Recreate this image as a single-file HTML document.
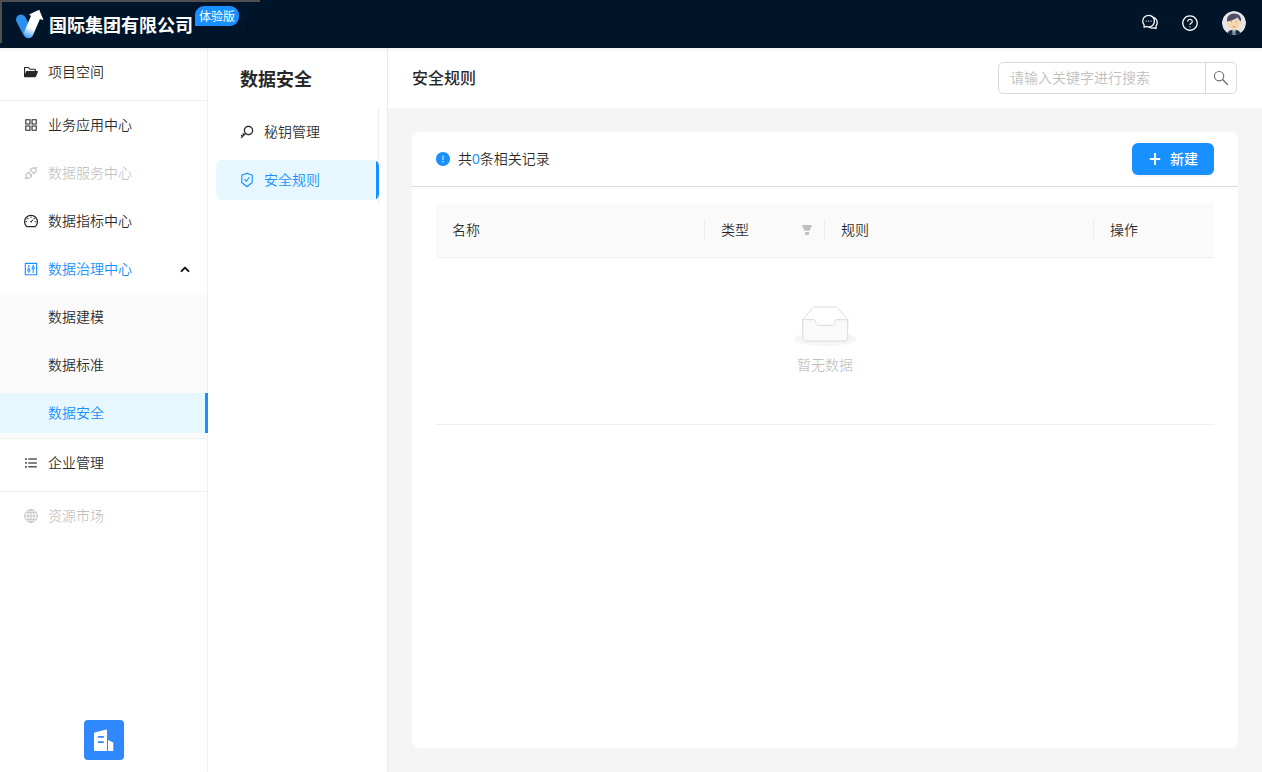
<!DOCTYPE html>
<html lang="zh-CN">
<head>
<meta charset="utf-8">
<title>安全规则</title>
<style>
*{box-sizing:border-box;margin:0;padding:0}
html,body{width:1262px;height:772px;overflow:hidden;background:#fff}
body{font-family:"Liberation Sans","Noto Sans CJK SC",sans-serif;font-size:14px;font-weight:350;color:rgba(0,0,0,.85);position:relative}
.abs{position:absolute}
.t{position:absolute;white-space:nowrap;line-height:22px;height:22px}
/* header */
#hdr{left:0;top:0;width:1262px;height:48px;background:#001529}
#hshadow{left:0;top:48px;width:1262px;height:5px;background:linear-gradient(rgba(0,21,41,.05),rgba(0,21,41,0))}
#gtop{left:0;top:0;width:260px;height:2px;background:linear-gradient(#4d4d4d 50%,#545250 50%)}
#gleft{left:0;top:0;width:2px;height:43px;background:linear-gradient(90deg,#4d4d4d 50%,#545250 50%)}
#title{left:49px;top:13.5px;font-size:18px;font-weight:700;color:#fff;line-height:24px;height:24px}
#badge{left:195px;top:6px;width:44px;height:20px;background:#1890ff;border-radius:9px 9px 9px 0;color:#fff;font-size:12px;font-weight:400;line-height:23px;text-align:center;overflow:hidden}
#semi{left:246px;top:14px;color:#000;font-size:14px}
/* sider */
#sider{left:0;top:48px;width:208px;height:724px;background:#fff;border-right:1px solid #f0f0f0}
.mi{left:48px}
.dis{color:rgba(0,0,0,.25)}
.blue{color:#1890ff}
.hr{left:0;width:207px;height:1px;background:#f0f0f0}
#subbg{left:0;top:293px;width:207px;height:144px;background:#fafafa}
#sel1{left:0;top:393px;width:208px;height:40px;background:#e6f7ff;border-right:3px solid #1890ff}
/* second panel */
#pan{left:208px;top:48px;width:180px;height:724px;background:#fff;border-right:1px solid #ebebeb}
#ptitle{left:240px;top:67px;font-size:18px;font-weight:700;line-height:26px;height:26px}
#pline{left:378px;top:108px;width:1px;height:96px;background:#f0f0f0}
#sel2{left:216px;top:160px;width:163px;height:40px;background:#e6f7ff;border-radius:6px;overflow:hidden}
#sel2:after{content:"";position:absolute;right:0;top:0;width:3px;height:40px;background:#1890ff}
/* main */
#mainbg{left:388px;top:108px;width:874px;height:664px;background:#f5f5f5}
#mtitle{left:412px;top:67px;font-size:16px;font-weight:500;line-height:24px;height:24px}
#search{left:998px;top:62px;width:239px;height:32px;border:1px solid #d9d9d9;border-radius:5px;background:#fff}
#sdiv{left:1205px;top:62px;width:1px;height:32px;background:#d9d9d9}
#ph{left:1010px;top:67px;color:#bfbfbf}
#card{left:412px;top:132px;width:826px;height:616px;background:#fff;border-radius:8px}
#cdiv{left:412px;top:186px;width:826px;height:1px;background:#dcdcdc}
#btn{left:1132px;top:143px;width:82px;height:32px;background:#1890ff;border-radius:6px;box-shadow:0 2px 0 rgba(0,0,0,.045)}
#thead{left:436px;top:203px;width:778px;height:54px;background:#fafafa;border-radius:2px 2px 0 0}
.bl{left:436px;width:778px;height:1px;background:#f0f0f0}
.sep{top:219px;width:1px;height:22px;background:#ececec}
.th{top:219px}
#empty{left:797px;top:354px;color:rgba(0,0,0,.25)}
#fab{left:84px;top:720px;width:40px;height:40px;border-radius:4px;background:#3088ff}
svg{position:absolute;overflow:visible}
</style>
</head>
<body>
<!-- header -->
<div id="hdr" class="abs"></div>
<div id="gtop" class="abs"></div>
<div id="gleft" class="abs"></div>
<div id="title" class="t">国际集团有限公司</div>
<div id="badge" class="abs">体验版</div>
<div id="semi" class="t">;</div>

<!-- sider -->
<div id="sider" class="abs"></div>
<div id="subbg" class="abs"></div>
<div id="sel1" class="abs"></div>
<div class="t mi" style="top:61px">项目空间</div>
<div class="abs hr" style="top:100px"></div>
<div class="t mi" style="top:114px">业务应用中心</div>
<div class="t mi dis" style="top:162px">数据服务中心</div>
<div class="t mi" style="top:210px">数据指标中心</div>
<div class="t mi blue" style="top:258px">数据治理中心</div>
<div class="t mi" style="top:306px">数据建模</div>
<div class="t mi" style="top:354px">数据标准</div>
<div class="t mi blue" style="top:402px">数据安全</div>
<div class="abs hr" style="top:438px"></div>
<div class="t mi" style="top:452px">企业管理</div>
<div class="abs hr" style="top:491px"></div>
<div class="t mi dis" style="top:505px">资源市场</div>
<div id="fab" class="abs"></div>


<!-- logo -->
<svg class="abs" style="left:0;top:0" width="60" height="48" viewBox="0 0 60 48">
<defs><linearGradient id="lg" gradientUnits="userSpaceOnUse" x1="35.4" y1="17.5" x2="27.6" y2="38"><stop offset="0" stop-color="#fff"/><stop offset=".52" stop-color="#fff"/><stop offset="1" stop-color="#3f98f3"/></linearGradient></defs>
<line x1="21" y1="19.5" x2="28.1" y2="33.2" stroke="#2b90ef" stroke-width="10" stroke-linecap="round"/>
<path d="M28.7 33.3L35.6 17.2" stroke="url(#lg)" stroke-width="9.4" stroke-linecap="round" fill="none"/>
<polygon points="39.2,9.8 29,14.5 31.4,16.2 40.2,19.3 43.5,20" fill="#fff"/>
</svg>
<!-- header right icons -->
<svg class="abs" style="left:1141px;top:13.3px" width="18" height="18" viewBox="0 0 1024 1024" fill="#fff"><path d="M573 421c-23.100 0-41 17.900-41 40s17.900 40 41 40c21.100 0 39-17.900 39-40s-17.900-40-39-40zm-280 0c-23.100 0-41 17.900-41 40s17.900 40 41 40c21.100 0 39-17.900 39-40s-17.900-40-39-40z"/><path d="M894 345a343.920 343.920 0 0 0-189-130v.100c-17.100-19-36.400-36.500-58-52.100-163.700-119-393.500-82.700-513 81-96.300 133-92.200 311.900 6 439l.800 132.600c0 3.200.5 6.400 1.500 9.400a31.950 31.950 0 0 0 40.100 20.900L309 806c33.500 11.900 68.100 18.700 102.500 20.600l-.5.400c89.100 64.900 205.900 84.400 313 49l127.100 41.400c3.200 1 6.500 1.600 9.900 1.600 17.700 0 32-14.300 32-32V753c88.100-119.600 90.400-284.900 1-408zM323 735l-12-5-99 31-1-104-8-9c-84.600-103.200-90.200-251.900-11-361 96.400-132.200 281.200-161.400 413-66 132.200 96.100 161.500 280.600 66 412-80.100 109.900-223.500 150.500-348 102zm505-17l-8 10 1 104-98-33-12 5c-56 20.800-115.700 22.500-171 7l-.2-.1A367.310 367.310 0 0 0 729 676c76.400-105.300 88.800-237.600 44.400-350.400l.6.400c23 16.500 44.100 37.100 62 62 72.600 99.600 68.500 235.200-8 330z"/><path d="M433 421c-23.100 0-41 17.900-41 40s17.900 40 41 40c21.100 0 39-17.900 39-40s-17.900-40-39-40z"/></svg>
<svg class="abs" style="left:1181px;top:13.8px" width="18" height="18" viewBox="0 0 1024 1024" fill="#fff"><path d="M512 64C264.600 64 64 264.600 64 512s200.600 448 448 448 448-200.600 448-448S759.400 64 512 64zm0 820c-205.400 0-372-166.600-372-372s166.600-372 372-372 372 166.600 372 372-166.600 372-372 372z"/><path d="M623.600 316.700C593.600 290.400 554 276 512 276s-81.600 14.500-111.600 40.700C369.200 344 352 380.700 352 420v7.600c0 4.400 3.600 8 8 8h48c4.400 0 8-3.600 8-8V420c0-44.100 43.100-80 96-80s96 35.900 96 80c0 31.100-22 59.600-56.100 72.700-21.200 8.100-39.200 22.300-52.100 40.900-13.100 19-19.900 41.800-19.900 64.900V620c0 4.400 3.600 8 8 8h48c4.400 0 8-3.600 8-8v-22.700a48.300 48.300 0 0 1 30.900-44.800c59-22.700 97.100-74.700 97.100-132.500.1-39.300-17.100-76-48.300-103.300zM472 732a40 40 0 1 0 80 0 40 40 0 1 0-80 0z"/></svg>
<!-- avatar -->
<svg class="abs" style="left:1222px;top:11px" width="24" height="24" viewBox="0 0 24 24">
<defs><clipPath id="avc"><circle cx="12" cy="12" r="12"/></clipPath></defs>
<g clip-path="url(#avc)">
<circle cx="12" cy="12" r="12" fill="#e5e5e9"/>
<path d="M3.600 24.500L7.200 19.700Q12 17.700 16.800 19.700L20.400 24.500Z" fill="#1c2635"/>
<path d="M10.500 18.700h3l-.2 5.500h-2.600z" fill="#dbe7f0"/>
<path d="M11.400 19.200h1.200l.7 5h-2.600z" fill="#5f93b3"/>
<rect x="10.500" y="16.500" width="3" height="2.600" fill="#f2c99c"/>
<circle cx="5.400" cy="12.300" r="1.100" fill="#f6d3a8"/><circle cx="18.600" cy="12.300" r="1.100" fill="#f6d3a8"/>
<ellipse cx="12" cy="12.600" rx="6" ry="5.900" fill="#f7d6ab"/>
<path d="M5 10.600C4.400 5.800 7.600 2.600 12.300 2.600C17 2.600 19.800 6.200 19 10.500C17.500 9.500 16.100 7.900 15.600 6.600C13 8.500 8.600 10.100 5 10.600Z" fill="#4e4e69"/>
<circle cx="9.500" cy="10.600" r=".55" fill="#8c8c8c"/><circle cx="14.300" cy="10.600" r=".55" fill="#8c8c8c"/>
<ellipse cx="12" cy="15.700" rx="1.500" ry=".75" fill="#ea8f6f"/>
</g></svg>

<!-- sider icons -->
<svg class="abs" style="left:23px;top:64px" width="16" height="16" viewBox="0 0 1024 1024" fill="#262626"><path d="M928 444H820V330.400c0-17.700-14.300-32-32-32H473L355.700 186.200a8.150 8.150 0 0 0-5.500-2.200H96c-17.700 0-32 14.300-32 32v592c0 17.700 14.300 32 32 32h698c13 0 24.800-7.900 29.700-20l134-332c1.500-3.800 2.300-7.900 2.300-12 0-17.700-14.300-32-32-32zm-180 0H238c-13 0-24.800 7.900-29.700 20L136 643.200V256h188.500l119.600 114.400H748V444z"/></svg>
<svg class="abs" style="left:23px;top:117px" width="16" height="16" viewBox="0 0 1024 1024" fill="#262626"><path d="M464 144H160c-8.800 0-16 7.200-16 16v304c0 8.800 7.200 16 16 16h304c8.800 0 16-7.200 16-16V160c0-8.800-7.200-16-16-16zm-52 268H212V212h200v200zm452-268H560c-8.800 0-16 7.200-16 16v304c0 8.800 7.200 16 16 16h304c8.800 0 16-7.200 16-16V160c0-8.800-7.200-16-16-16zm-52 268H612V212h200v200zM464 544H160c-8.800 0-16 7.200-16 16v304c0 8.800 7.200 16 16 16h304c8.800 0 16-7.200 16-16V560c0-8.800-7.200-16-16-16zm-52 268H212V612h200v200zm452-268H560c-8.800 0-16 7.200-16 16v304c0 8.800 7.200 16 16 16h304c8.800 0 16-7.200 16-16V560c0-8.800-7.200-16-16-16zm-52 268H612V612h200v200z"/></svg>
<svg class="abs" style="left:23px;top:165px" width="16" height="16" viewBox="0 0 1024 1024" fill="rgba(0,0,0,.25)"><path d="M917.700 148.800l-42.400-42.400c-1.600-1.600-3.600-2.300-5.700-2.300s-4.100.8-5.700 2.300l-76.100 76.100a199.270 199.270 0 0 0-112.100-34.300c-51.200 0-102.400 19.500-141.500 58.600L432.300 309.400c-3.100 3.100-3.100 8.200 0 11.300L704 592.400c1.600 1.600 3.600 2.300 5.700 2.300 2 0 4.100-.8 5.700-2.300l101.900-101.900c68.900-69 77-175.700 24.300-253.500l76.100-76.100c3.100-3.200 3.100-8.300 0-11.400zM769.100 441.700l-59.400 59.400-186.800-186.800 59.400-59.400c24.900-24.900 58.100-38.700 93.400-38.700 35.300 0 68.400 13.700 93.400 38.700 24.900 24.900 38.700 58.100 38.700 93.400 0 35.300-13.800 68.400-38.700 93.400zm-190.200 105a8.030 8.030 0 0 0-11.300 0L501 613.300 410.700 523l66.700-66.700c3.100-3.100 3.100-8.200 0-11.300L441 408.600a8.030 8.030 0 0 0-11.300 0L363 475.300l-43-43a7.850 7.850 0 0 0-5.700-2.300c-2 0-4.100.8-5.700 2.300L206.800 534.200c-68.900 69-77 175.700-24.300 253.500l-76.100 76.100a8.030 8.030 0 0 0 0 11.300l42.400 42.400c1.600 1.600 3.600 2.300 5.700 2.300s4.100-.8 5.700-2.300l76.100-76.100c33.700 22.900 72.900 34.300 112.100 34.300 51.200 0 102.400-19.500 141.500-58.600l101.900-101.900c3.100-3.100 3.100-8.200 0-11.300l-43-43 66.700-66.700c3.100-3.100 3.100-8.200 0-11.300l-36.600-36.200zM441.700 769.100a131.320 131.320 0 0 1-93.400 38.700c-35.300 0-68.400-13.700-93.400-38.700a131.320 131.320 0 0 1-38.700-93.400c0-35.300 13.700-68.400 38.700-93.400l59.400-59.400 186.800 186.800-59.400 59.400z"/></svg>
<svg class="abs" style="left:23px;top:213px" width="16" height="16" viewBox="0 0 1024 1024" fill="#262626"><path d="M924.800 385.600a446.700 446.700 0 0 0-96-142.400 446.700 446.700 0 0 0-142.400-96C631.100 123.800 572.500 112 512 112s-119.100 11.800-174.400 35.200a446.700 446.700 0 0 0-142.400 96 446.700 446.700 0 0 0-96 142.400C75.800 440.900 64 499.500 64 560c0 132.700 58.300 257.700 159.900 343.100l1.700 1.400c5.800 4.800 13.100 7.500 20.600 7.500h531.700c7.500 0 14.800-2.700 20.600-7.500l1.700-1.400C901.700 817.700 960 692.700 960 560c0-60.500-11.900-119.100-35.200-174.400zM761.400 836H262.600A371.120 371.120 0 0 1 140 560c0-99.400 38.700-192.800 109-263 70.300-70.300 163.700-109 263-109 99.400 0 192.800 38.700 263 109 70.300 70.300 109 163.700 109 263 0 105.600-44.500 205.500-122.600 276zM623.500 421.500a8.030 8.030 0 0 0-11.300 0L527.700 506c-18.700-5-39.400-.2-54.100 14.500a55.950 55.950 0 0 0 0 79.200 55.950 55.950 0 0 0 79.200 0 55.870 55.870 0 0 0 14.500-54.100l84.500-84.500c3.100-3.100 3.100-8.200 0-11.300l-28.300-28.300zM490 320h44c4.400 0 8-3.600 8-8v-80c0-4.400-3.600-8-8-8h-44c-4.400 0-8 3.600-8 8v80c0 4.400 3.600 8 8 8zm260 218v44c0 4.400 3.600 8 8 8h80c4.400 0 8-3.600 8-8v-44c0-4.400-3.600-8-8-8h-80c-4.400 0-8 3.600-8 8zm12.700-197.200l-31.100-31.100a8.030 8.030 0 0 0-11.300 0l-56.600 56.600a8.030 8.030 0 0 0 0 11.300l31.100 31.100c3.100 3.100 8.200 3.100 11.300 0l56.600-56.600c3.100-3.100 3.100-8.200 0-11.300zm-458.600-31.100a8.030 8.030 0 0 0-11.300 0l-31.100 31.100a8.030 8.030 0 0 0 0 11.300l56.600 56.600c3.100 3.100 8.200 3.100 11.300 0l31.100-31.100c3.100-3.100 3.100-8.200 0-11.300l-56.600-56.600zM262 530h-80c-4.400 0-8 3.600-8 8v44c0 4.400 3.600 8 8 8h80c4.400 0 8-3.600 8-8v-44c0-4.400-3.600-8-8-8z"/></svg>
<svg class="abs" style="left:23px;top:261px" width="16" height="16" viewBox="0 0 1024 1024"><rect x="148" y="148" width="728" height="728" rx="6" fill="none" stroke="#1890ff" stroke-width="72"/><rect x="340" y="256" width="64" height="512" rx="8" fill="#1890ff"/><rect x="620" y="256" width="64" height="512" rx="8" fill="#1890ff"/><circle cx="372" cy="584" r="70" fill="#fff" stroke="#1890ff" stroke-width="68"/><circle cx="652" cy="440" r="70" fill="#fff" stroke="#1890ff" stroke-width="68"/></svg>
<svg class="abs" style="left:0;top:0" width="208" height="772" viewBox="0 0 208 772">
<polyline points="181.500,271.100 185,267.600 188.500,271.100" fill="none" stroke="#141414" stroke-width="1.950" stroke-linecap="round" stroke-linejoin="round"/>
<g fill="#595959"><rect x="25" y="458.200" width="2" height="1.700" rx=".5"/><rect x="25" y="462.100" width="2" height="1.700" rx=".5"/><rect x="25" y="466" width="2" height="1.700" rx=".5"/><rect x="28.200" y="458.300" width="8.700" height="1.500" rx=".3"/><rect x="28.200" y="462.200" width="8.700" height="1.500" rx=".3"/><rect x="28.200" y="466.100" width="8.700" height="1.500" rx=".3"/></g>
<g fill="none" stroke="#c6c6c6" stroke-width="1"><circle cx="31" cy="516" r="6.450"/><ellipse cx="31" cy="516" rx="3" ry="6.450"/><path d="M31 509.500v13M24.600 516h12.800M25.600 512.700h10.800M25.600 519.300h10.800"/></g>
</svg>
<!-- fab icon -->
<svg class="abs" style="left:84px;top:720px" width="40" height="40" viewBox="0 0 40 40"><path d="M10 13.300Q10 12.800 10.600 12.600L22.300 9.600Q23 9.500 23 10.200V31H10.800Q10 31 10 30.200Z" fill="#fff"/><path d="M24 20L28.800 22.200Q29.300 22.500 29.300 23V30.200Q29.300 31 28.500 31H24Z" fill="#fff"/><rect x="13.700" y="16" width="6.300" height="1.800" rx=".9" fill="#3088ff"/><rect x="13.700" y="21.300" width="6.300" height="1.800" rx=".9" fill="#3088ff"/></svg>

<!-- second panel -->
<div id="pan" class="abs"></div>
<div id="ptitle" class="t">数据安全</div>
<div id="pline" class="abs"></div>
<div id="sel2" class="abs"></div>
<div class="t" style="left:264px;top:121px">秘钥管理</div>
<div class="t blue" style="left:264px;top:169px">安全规则</div>

<!-- main -->
<div id="mainbg" class="abs"></div>
<div id="mtitle" class="t">安全规则</div>
<div id="search" class="abs"></div>
<div id="sdiv" class="abs"></div>
<div id="ph" class="t">请输入关键字进行搜索</div>
<div id="card" class="abs"></div>
<div class="t" style="left:458px;top:148px">共<span class="blue">0</span>条相关记录</div>
<div id="cdiv" class="abs"></div>
<div id="btn" class="abs"></div>
<div class="t" style="left:1170px;top:148px;color:#fff;font-weight:500">新建</div>
<div id="thead" class="abs"></div>
<div class="abs bl" style="top:257px"></div>
<div class="abs bl" style="top:424px"></div>
<div class="abs sep" style="left:704px"></div>
<div class="abs sep" style="left:824px"></div>
<div class="abs sep" style="left:1093px"></div>
<div class="t th" style="left:452px">名称</div>
<div class="t th" style="left:721px">类型</div>
<div class="t th" style="left:841px">规则</div>
<div class="t th" style="left:1110px">操作</div>
<div id="empty" class="t">暂无数据</div>

<!-- panel + main icons -->
<svg class="abs" style="left:239px;top:124px" width="16" height="16" viewBox="0 0 1024 1024" fill="#262626"><path d="M608 112c-167.900 0-304 136.100-304 304 0 70.300 23.900 135 63.900 186.500l-41.100 41.100-62.300-62.300a8.150 8.150 0 0 0-11.400 0l-39.800 39.800a8.150 8.150 0 0 0 0 11.400l62.300 62.300-44.900 44.900-62.300-62.300a8.150 8.150 0 0 0-11.400 0l-39.800 39.800a8.150 8.150 0 0 0 0 11.400l62.300 62.300-65.300 65.300a8.030 8.030 0 0 0 0 11.300l42.300 42.300c3.100 3.100 8.200 3.100 11.300 0l253.600-253.600A304.060 304.060 0 0 0 608 720c167.900 0 304-136.100 304-304S775.900 112 608 112zm161.200 465.200C726.200 620.300 668.900 644 608 644c-60.900 0-118.200-23.700-161.200-66.800-43.100-43-66.800-100.300-66.800-161.200 0-60.900 23.700-118.200 66.800-161.200 43-43.100 100.300-66.800 161.200-66.800 60.900 0 118.200 23.700 161.200 66.800 43.100 43 66.800 100.300 66.800 161.200 0 60.900-23.700 118.200-66.800 161.200z"/></svg>
<svg class="abs" style="left:239px;top:172px" width="16" height="16" viewBox="0 0 1024 1024" fill="#1890ff"><path d="M866.900 169.900L527.100 54.100C523 52.700 517.500 52 512 52s-11 .7-15.100 2.100L157.100 169.900c-8.300 2.800-15.100 12.400-15.100 21.200v482.400c0 8.800 5.700 20.400 12.600 25.900L499.300 968.100c3.500 2.700 8 4.100 12.600 4.100s9.200-1.400 12.600-4.100L869.400 699.400c6.900-5.400 12.600-17 12.600-25.900V191.100c.2-8.800-6.600-18.300-15.100-21.200zM810 654.300L512 886.500 214 654.300V226.700l298-101.600 298 101.600v427.600zm-405.800-201c-3-4.100-7.800-6.600-13-6.600H336c-6.500 0-10.300 7.400-6.500 12.700l126.400 174a16.100 16.100 0 0 0 26 0l212.600-292.700c3.800-5.300 0-12.700-6.500-12.700h-55.200c-5.100 0-10 2.500-13 6.600L468.900 542.400l-64.700-89.100z"/></svg>
<svg class="abs" style="left:435px;top:151px" width="16" height="16" viewBox="0 0 1024 1024" fill="#1890ff"><path d="M512 64C264.600 64 64 264.600 64 512s200.600 448 448 448 448-200.600 448-448S759.400 64 512 64zm-32 232c0-4.400 3.600-8 8-8h48c4.400 0 8 3.600 8 8v272c0 4.400-3.600 8-8 8h-48c-4.400 0-8-3.600-8-8V296zm32 440a48.010 48.010 0 0 1 0-96 48.010 48.010 0 0 1 0 96z"/></svg>
<svg class="abs" style="left:388px;top:48px" width="874" height="724" viewBox="388 48 874 724">
<g fill="none" stroke="#6a6a6a" stroke-linecap="round"><circle cx="1219.100" cy="76.150" r="4.650" stroke-width="1.150"/><path d="M1222.600 79.600L1227.500 84.400" stroke-width="1.350"/></g>
<rect x="1149.800" y="158" width="10.400" height="2" fill="#fff"/><rect x="1154" y="153.100" width="2" height="11.800" fill="#fff"/>
<polygon points="801.800,225.100 812.100,225.100 809.500,230.700 804.500,230.700" fill="#bfbfbf"/><rect x="805.100" y="232.100" width="3.900" height="2.800" fill="#bfbfbf"/>
</svg>
<svg class="abs" style="left:793.8px;top:306px" width="62.44" height="40" viewBox="0 0 64 41"><g transform="translate(0 1)" fill="none" fill-rule="evenodd"><ellipse cx="32" cy="33" rx="32" ry="7" fill="#f5f5f5"/><g fill-rule="nonzero" stroke="#d9d9d9"><path d="M55 12.760L44.854 1.258C44.367.474 43.656 0 42.907 0H21.093c-.749 0-1.460.474-1.947 1.257L9 12.761V22h46v-9.240z"/><path d="M41.613 15.931c0-1.605.994-2.930 2.227-2.931H55v18.137C55 33.260 53.680 35 52.050 35h-40.100C10.320 35 9 33.259 9 31.137V13h11.160c1.233 0 2.227 1.323 2.227 2.928v.022c0 1.605 1.005 2.901 2.237 2.901h14.752c1.232 0 2.237-1.308 2.237-2.913v-.007z" fill="#fafafa"/></g></g></svg>
<div id="hshadow" class="abs"></div>
</body>
</html>
